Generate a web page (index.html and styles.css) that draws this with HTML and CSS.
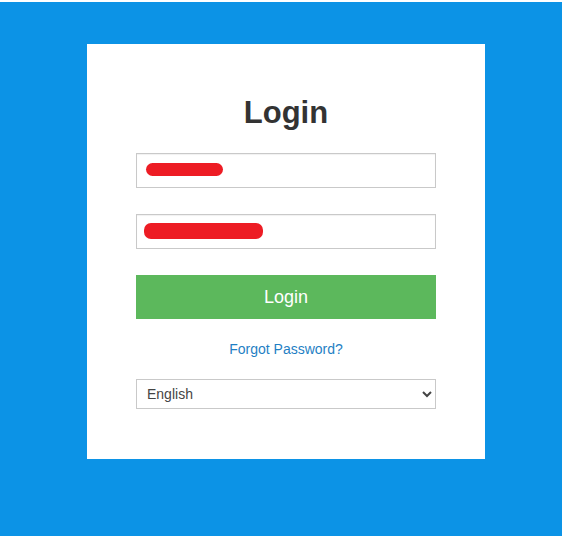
FILE: index.html
```html
<!doctype html>
<html lang="en">
  <head>
    <meta charset="UTF-8" />
    <meta name="viewport" content="width=device-width, initial-scale=1.0" />
    <title>Login</title>
    <link rel="stylesheet" href="styles.css">
  </head>
  <body>
    <div class="page">
      <form class="login-box" onsubmit="return false">
        <h1>Login</h1>

        <div class="field">
          <input type="text" class="text-input" aria-label="Username" />
          <span class="redact redact-user"></span>
        </div>

        <div class="field">
          <input type="password" class="text-input" aria-label="Password" />
          <span class="redact redact-pass"></span>
        </div>

        <button type="submit" class="login-button">Login</button>

        <a href="#" class="forgot-link">Forgot Password?</a>

        <select class="lang-select">
          <option>English</option>
          <option>Deutsch</option>
          <option>Français</option>
        </select>
      </form>
    </div>
  </body>
</html>
```

FILE: styles.css
```css
* {
  margin: 0;
  padding: 0;
  box-sizing: border-box;
}

body {
  font-family: Arial, "Liberation Sans", sans-serif;
  background: #ffffff;
  padding-top: 2px;
}

.page {
  background: #0c93e6;
  min-height: calc(100vh - 2px);
  display: flex;
  justify-content: center;
  align-items: flex-start;
  padding: 42px 0 0 10px;
}

.login-box {
  background: #ffffff;
  width: 398px;
  padding: 52px 49px 50px;
  display: flex;
  flex-direction: column;
}

h1 {
  color: #333333;
  font-size: 31px;
  font-weight: 700;
  line-height: 34px;
  text-align: center;
  margin-bottom: 23px;
}

.field {
  position: relative;
  margin-bottom: 26px;
}

.text-input {
  display: block;
  width: 100%;
  height: 35px;
  border: 1px solid #c9c9c9;
  box-shadow: inset 0 1px 1px rgba(0, 0, 0, 0.06);
  padding: 0 10px;
  font-family: inherit;
  font-size: 14px;
  background: #ffffff;
}

/* red marker over the filled-in values */
.redact {
  position: absolute;
  background: #ed1c24;
  border-radius: 7px;
}

.redact-user {
  left: 10px;
  top: 10px;
  width: 77px;
  height: 13px;
}

.redact-pass {
  left: 8px;
  top: 9px;
  width: 119px;
  height: 16px;
}

.login-button {
  height: 44px;
  background: #5cb85c;
  color: #ffffff;
  border: none;
  font-family: inherit;
  font-size: 18px;
  cursor: pointer;
}

.forgot-link {
  display: block;
  margin-top: 20px;
  color: #1f7fc4;
  font-size: 14px;
  line-height: 20px;
  text-align: center;
  text-decoration: none;
}

.lang-select {
  margin-top: 20px;
  height: 30px;
  border: 1px solid #c9c9c9;
  border-radius: 0;
  background: #ffffff;
  color: #444444;
  font-family: inherit;
  font-size: 14px;
  padding: 0 6px;
}
```
